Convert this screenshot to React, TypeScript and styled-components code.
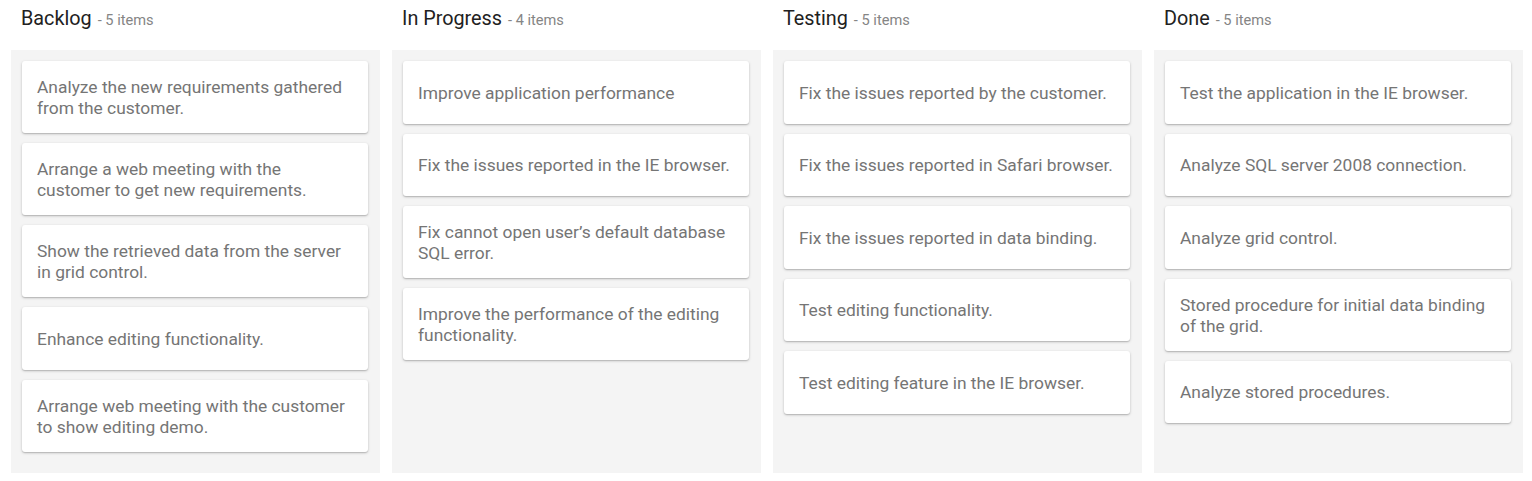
import React from "react";
import styled, { createGlobalStyle } from "styled-components";

const GlobalStyle = createGlobalStyle`
  html, body {
    margin: 0;
    padding: 0;
    background: #ffffff;
    font-family: Roboto, "Noto Sans", "Liberation Sans", sans-serif;
  }
  * { box-sizing: border-box; }
`;

const Board = styled.div`
  display: grid;
  grid-template-columns: repeat(4, 369px);
  column-gap: 12px;
  padding: 0 9px 8px 11px;
`;

const Column = styled.section`
  display: flex;
  flex-direction: column;
`;

const Header = styled.header`
  height: 50px;
  padding: 6px 0 0 10px;
  display: flex;
  align-items: baseline;
  gap: 6px;
`;

const Title = styled.span`
  font-size: 19.8px;
  color: #212121;
  line-height: 26px;
`;

const Count = styled.span`
  font-size: 14.6px;
  color: #858585;
`;

const Lane = styled.div`
  height: 423px;
  background: #f4f4f4;
  padding: 11px 12px 11px 11px;
  display: flex;
  flex-direction: column;
  gap: 10px;
`;

const Card = styled.div`
  background: #ffffff;
  border-radius: 3px;
  box-shadow: 0 1px 3px 0 rgba(0, 0, 0, 0.2), 0 1px 1px 0 rgba(0, 0, 0, 0.12);
  min-height: 62.5px;
  padding: 16px 15px 14px;
  display: flex;
  align-items: center;
  font-size: 17.4px;
  line-height: 21px;
  color: #757575;
`;

const columns: { title: string; items: string[] }[] = [
  {
    title: "Backlog",
    items: [
      "Analyze the new requirements gathered from the customer.",
      "Arrange a web meeting with the customer to get new requirements.",
      "Show the retrieved data from the server in grid control.",
      "Enhance editing functionality.",
      "Arrange web meeting with the customer to show editing demo.",
    ],
  },
  {
    title: "In Progress",
    items: [
      "Improve application performance",
      "Fix the issues reported in the IE browser.",
      "Fix cannot open user\u2019s default database SQL error.",
      "Improve the performance of the editing functionality.",
    ],
  },
  {
    title: "Testing",
    items: [
      "Fix the issues reported by the customer.",
      "Fix the issues reported in Safari browser.",
      "Fix the issues reported in data binding.",
      "Test editing functionality.",
      "Test editing feature in the IE browser.",
    ],
  },
  {
    title: "Done",
    items: [
      "Test the application in the IE browser.",
      "Analyze SQL server 2008 connection.",
      "Analyze grid control.",
      "Stored procedure for initial data binding of the grid.",
      "Analyze stored procedures.",
    ],
  },
];

export default function App() {
  return (
    <>
      <GlobalStyle />
      <Board>
        {columns.map((col) => (
          <Column key={col.title}>
            <Header>
              <Title>{col.title}</Title>
              <Count>- {col.items.length} items</Count>
            </Header>
            <Lane>
              {col.items.map((item) => (
                <Card key={item}>{item}</Card>
              ))}
            </Lane>
          </Column>
        ))}
      </Board>
    </>
  );
}
